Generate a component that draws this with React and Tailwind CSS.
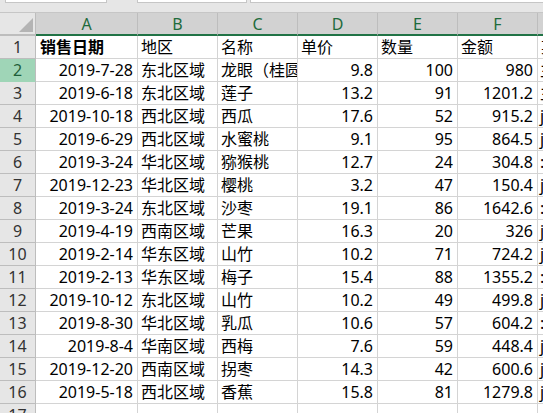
import React from "react";

const rows = [
  ["2019-7-28", "东北区域", "龙眼（桂圆）", "9.8", "100", "980"],
  ["2019-6-18", "东北区域", "莲子", "13.2", "91", "1201.2"],
  ["2019-10-18", "西北区域", "西瓜", "17.6", "52", "915.2"],
  ["2019-6-29", "西北区域", "水蜜桃", "9.1", "95", "864.5"],
  ["2019-3-24", "华北区域", "猕猴桃", "12.7", "24", "304.8"],
  ["2019-12-23", "华北区域", "樱桃", "3.2", "47", "150.4"],
  ["2019-3-24", "东北区域", "沙枣", "19.1", "86", "1642.6"],
  ["2019-4-19", "西南区域", "芒果", "16.3", "20", "326"],
  ["2019-2-14", "华东区域", "山竹", "10.2", "71", "724.2"],
  ["2019-2-13", "华东区域", "梅子", "15.4", "88", "1355.2"],
  ["2019-10-12", "东北区域", "山竹", "10.2", "49", "499.8"],
  ["2019-8-30", "华北区域", "乳瓜", "10.6", "57", "604.2"],
  ["2019-8-4", "华南区域", "西梅", "7.6", "59", "448.4"],
  ["2019-12-20", "西南区域", "拐枣", "14.3", "42", "600.6"],
  ["2019-5-18", "西北区域", "香蕉", "15.8", "81", "1279.8"],
];

const gCol = ["某", "主", "主", "j", "j", ":", "j", ":", "j", "j", ":", "j", ":", "j", "j", "j"];

const font = { fontFamily: '"Noto Sans", "Noto Sans CJK SC", sans-serif' };

const cellBase =
  "h-[23px] border-r border-b border-[#d4d4d4] overflow-hidden whitespace-nowrap flex items-center text-[16px] leading-none text-black";

function RowHeader({ n, selected }) {
  return (
    <div
      className={
        "h-[23px] w-[36px] border-r border-b flex items-center justify-center text-[16px] leading-none " +
        (selected
          ? "bg-[#9fd5b7] border-[#9fd5b7] border-r-[#bdbdbd] text-[#1e5e3a]"
          : "bg-[#e6e6e6] border-[#bdbdbd] text-[#333333]")
      }
    >
      {n}
    </div>
  );
}

export default function App() {
  return (
    <div className="w-[543px] h-[413px] overflow-hidden bg-white" style={font}>
      {/* top strip */}
      <div className="h-[13px] bg-[#e6e6e6] flex items-start border-b border-[#c6c6c6]">
        <div className="ml-[5px] w-[102px] h-[3px] bg-white border border-t-0 border-[#c6c6c6]" />
        <div className="ml-[30px] w-[110px] h-[3px] bg-white border border-t-0 border-[#c6c6c6]" />
        <div className="ml-[3px] flex-1 h-[3px] bg-white border border-t-0 border-r-0 border-[#c6c6c6]" />
      </div>
      {/* column header */}
      <div className="flex h-[23px]">
        <div className="w-[36px] h-full bg-[#e6e6e6] border-r border-b-2 border-[#bdbdbd] relative">
          <div className="absolute right-[2px] bottom-[2px] w-0 h-0 border-l-[14px] border-l-transparent border-b-[14px] border-b-[#b4b4b4]" />
        </div>
        {["A", "B", "C", "D", "E", "F", ""].map((c, i) => (
          <div
            key={i}
            className={
              "h-full overflow-hidden bg-[#d2d2d2] border-r border-[#bdbdbd] border-b-2 border-b-[#217346] flex items-center justify-center text-[16px] leading-none text-[#1e6b3c] " +
              (i === 0 ? "w-[102px]" : i === 6 ? "flex-1 border-r-0" : "w-[80px]")
            }
          >
            {c}
          </div>
        ))}
      </div>
      {/* row 1 */}
      <div className="flex">
        <RowHeader n={1} />
        <div className={cellBase + " w-[102px] pl-[4px] font-bold"}>销售日期</div>
        <div className={cellBase + " w-[80px] pl-[3px]"}>地区</div>
        <div className={cellBase + " w-[80px] pl-[3px]"}>名称</div>
        <div className={cellBase + " w-[80px] pl-[3px]"}>单价</div>
        <div className={cellBase + " w-[80px] pl-[3px]"}>数量</div>
        <div className={cellBase + " w-[80px] pl-[3px]"}>金额</div>
        <div className={cellBase + " flex-1 pl-[3px] border-r-0"}>{gCol[0]}</div>
      </div>
      {rows.map((r, idx) => (
        <div className="flex" key={idx}>
          <RowHeader n={idx + 2} selected={idx === 0} />
          <div className={cellBase + " w-[102px] justify-end pr-[4px]"}>{r[0]}</div>
          <div className={cellBase + " w-[80px] pl-[3px]"}>{r[1]}</div>
          <div className={cellBase + " w-[80px] pl-[3px]"}>{r[2]}</div>
          <div className={cellBase + " w-[80px] justify-end pr-[4px]"}>{r[3]}</div>
          <div className={cellBase + " w-[80px] justify-end pr-[4px]"}>{r[4]}</div>
          <div className={cellBase + " w-[80px] justify-end pr-[4px]"}>{r[5]}</div>
          <div
            className={
              cellBase +
              " flex-1 pl-[2px] border-r-0 " +
              (idx < 4 ? "text-[#c55a11]" : "text-[#404040]")
            }
          >
            {gCol[idx + 1]}
          </div>
        </div>
      ))}
      {/* row 17 */}
      <div className="flex">
        <RowHeader n={17} />
        <div className={cellBase + " w-[102px]"} />
        <div className={cellBase + " w-[80px]"} />
        <div className={cellBase + " w-[80px]"} />
        <div className={cellBase + " w-[80px]"} />
        <div className={cellBase + " w-[80px]"} />
        <div className={cellBase + " w-[80px]"} />
        <div className={cellBase + " flex-1 border-r-0"} />
      </div>
    </div>
  );
}
